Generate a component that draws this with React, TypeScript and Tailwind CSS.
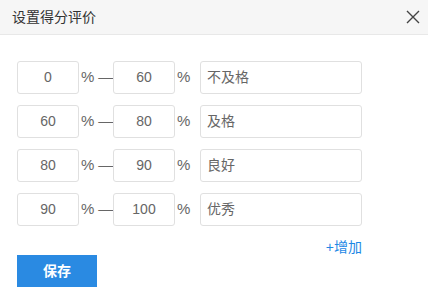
import React from "react"

const rows = [
  { from: "0", to: "60", label: "不及格" },
  { from: "60", to: "80", label: "及格" },
  { from: "80", to: "90", label: "良好" },
  { from: "90", to: "100", label: "优秀" },
]

export default function App() {
  return (
    <div
      className="w-[428px] h-[300px] bg-white overflow-hidden"
      style={{ fontFamily: '"Liberation Sans", "Noto Sans CJK SC", sans-serif' }}
    >
      {/* Header */}
      <div className="h-[35px] flex items-center justify-between pl-[12px] pr-[5px] bg-[#f6f6f6] border-b border-[#e8e8e8]">
        <span className="text-[14px] text-[#333]">设置得分评价</span>
        <button className="w-[20px] h-[20px] flex items-center justify-center text-[#444]">
          <svg width="14" height="14" viewBox="0 0 14 14" fill="none" stroke="currentColor" strokeWidth="1.4">
            <path d="M1 1 L13 13 M13 1 L1 13" />
          </svg>
        </button>
      </div>

      {/* Body */}
      <div className="pl-[17px] pt-[26px] w-[345px] box-content">
        <div className="flex flex-col gap-[11px]">
          {rows.map((r) => (
            <div key={r.label} className="flex items-center h-[33px] text-[#666] text-[14px]">
              <div className="w-[62px] h-[33px] border border-[#e0e0e0] rounded-[3px] flex items-center justify-center">
                {r.from}
              </div>
              <div className="w-[34px] flex items-center text-[15px] text-[#666]">
                <span className="ml-[2px]">%</span>
                <span className="ml-[4px]">—</span>
              </div>
              <div className="w-[62px] h-[33px] border border-[#e0e0e0] rounded-[3px] flex items-center justify-center">
                {r.to}
              </div>
              <div className="w-[25px] flex items-center text-[15px]">
                <span className="ml-[2px]">%</span>
              </div>
              <div className="w-[162px] h-[33px] border border-[#e0e0e0] rounded-[3px] flex items-center pl-[6px]">
                {r.label}
              </div>
            </div>
          ))}
        </div>

        <div className="flex justify-end mt-[13px] h-[16px] items-center">
          <span className="text-[14px] text-[#1e88e5] leading-none">+增加</span>
        </div>

        <button className="w-[80px] h-[32px] bg-[#2a8ae2] text-white text-[14px] font-bold flex items-center justify-center">
          保存
        </button>
      </div>
    </div>
  )
}
